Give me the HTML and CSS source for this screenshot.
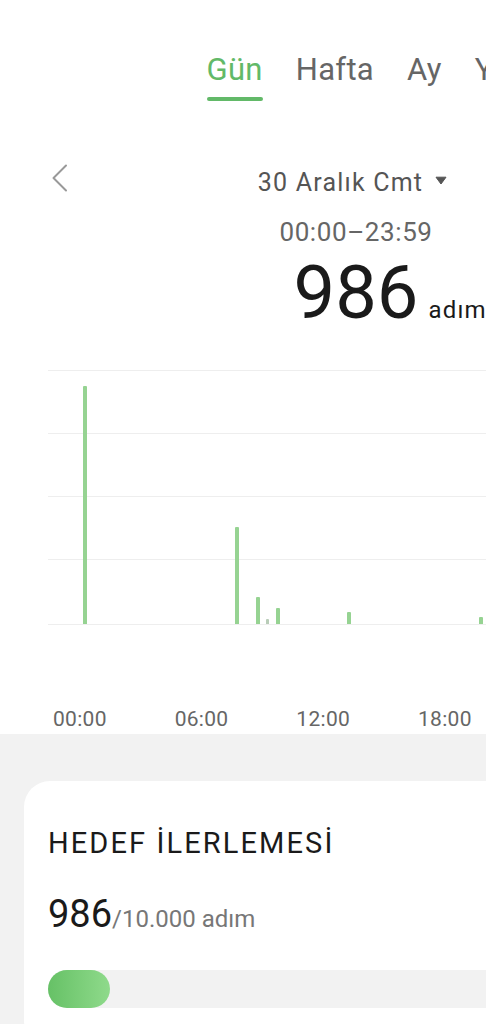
FILE: index.html
```html
<!DOCTYPE html>
<html lang="tr">
<head>
    <meta charset="UTF-8">
    <meta name="viewport" content="width=device-width, initial-scale=1.0">
    <title>Adımlar</title>
    <link rel="stylesheet" href="styles.css">
</head>
<body>
<div class="page">

    <nav class="tabs">
        <div class="tab active">Gün<span class="tab-bar"></span></div>
        <div class="tab">Hafta</div>
        <div class="tab">Ay</div>
        <div class="tab">Yıl</div>
    </nav>

    <div class="date-row">
        <svg class="chevron" width="16" height="28" viewBox="0 0 16 28">
            <polyline points="14,1.5 1.5,14 14,26.5" fill="none" stroke="#999" stroke-width="2" stroke-linecap="round" stroke-linejoin="round"/>
        </svg>
        <div class="date">
            30 Aralık Cmt
            <svg class="caret" width="12" height="9" viewBox="0 0 12 9">
                <path d="M1 1.2 L11 1.2 L6 8 Z" fill="#555" stroke="#555" stroke-width="1" stroke-linejoin="round"/>
            </svg>
        </div>
        <svg class="chevron right" width="16" height="28" viewBox="0 0 16 28">
            <polyline points="2,1.5 14.5,14 2,26.5" fill="none" stroke="#ccc" stroke-width="2" stroke-linecap="round" stroke-linejoin="round"/>
        </svg>
    </div>

    <p class="range">00:00–23:59</p>

    <div class="total">
        <span></span>
        <span class="total-num">986</span>
        <span class="total-unit">adım</span>
    </div>

    <!-- adım grafiği: 48 adet yarım saatlik dilim -->
    <div class="plot">
        <div class="bars">
            <div class="bar" style="grid-column:1;height:238px"></div>
            <div class="bar" style="grid-column:16;height:97px"></div>
            <div class="bar" style="grid-column:18;height:27px"></div>
            <div class="bar faint" style="grid-column:19;height:5px"></div>
            <div class="bar" style="grid-column:20;height:16px"></div>
            <div class="bar" style="grid-column:27;height:12px"></div>
            <div class="bar" style="grid-column:40;height:7px"></div>
        </div>
    </div>

    <div class="axis">
        <span>00:00</span>
        <span>06:00</span>
        <span>12:00</span>
        <span>18:00</span>
        <span>24:00</span>
    </div>

    <section class="summary">
        <div class="card">
            <h3 class="card-title">HEDEF İLERLEMESİ</h3>
            <p class="goal"><span class="goal-num">986</span><span class="goal-total">/10.000 adım</span></p>
            <div class="track">
                <div class="fill" style="width:62px"></div>
            </div>
        </div>
    </section>

</div>
</body>
</html>
```

FILE: styles.css
```css
body {
    margin: 0;
    background: #fff;
    font-family: Roboto, "Liberation Sans", sans-serif;
    overflow: hidden;
}
.page {
    width: 712px;
}

/* sekmeler */
.tabs {
    display: flex;
    justify-content: center;
    gap: 33px;
    padding-top: 50px;
    padding-left: 4px;
}
.tab {
    display: flex;
    flex-direction: column;
    font-size: 31px;
    line-height: 40px;
    letter-spacing: 0.3px;
    color: #666;
}
.tab.active {
    color: #62b968;
}
.tab-bar {
    height: 4px;
    margin-top: 7px;
    border-radius: 2px;
    background: #62b968;
}

/* tarih */
.date-row {
    display: grid;
    grid-template-columns: 1fr auto 1fr;
    align-items: start;
    margin-top: 63px;
    padding: 0 52px;
}
.chevron.right {
    justify-self: end;
}
.date {
    display: flex;
    align-items: center;
    margin-right: 7px;
    padding-top: 1px;
    font-size: 25px;
    line-height: 35px;
    letter-spacing: 1.2px;
    color: #555;
}
.caret {
    margin-left: 12px;
    margin-top: -4px;
}
.range {
    margin: 15px 0 0;
    text-align: center;
    font-size: 26px;
    line-height: 34px;
    letter-spacing: 0.6px;
    color: #666;
}
.total {
    display: grid;
    grid-template-columns: 1fr auto 1fr;
    align-items: baseline;
    margin-top: 4px;
    color: #1a1a1a;
}
.total-num {
    font-size: 74px;
    line-height: 80px;
}
.total-unit {
    font-size: 24px;
    letter-spacing: 1.2px;
    margin-left: 10px;
}

/* grafik */
.plot {
    height: 253px;
    margin: 37px 48px 0;
    border-top: 1px solid #eee;
    border-bottom: 1px solid #eee;
    background:
        linear-gradient(#eee, #eee) 0 62px / 100% 1px no-repeat,
        linear-gradient(#eee, #eee) 0 125px / 100% 1px no-repeat,
        linear-gradient(#eee, #eee) 0 188px / 100% 1px no-repeat;
}
.bars {
    display: grid;
    grid-template-columns: repeat(48, 1fr);
    width: 487px;
    height: 100%;
    margin-left: 32px;
}
.bar {
    grid-row: 1;
    align-self: end;
    justify-self: center;
    width: 4px;
    border-radius: 1px 1px 0 0;
    background: #96d392;
}
.bar.faint {
    width: 3px;
    background: #b9cdb8;
}
.axis {
    display: flex;
    margin-top: 80px;
    padding-left: 19px;
    padding-bottom: 1px;
}
.axis span {
    flex: 0 0 121.7px;
    text-align: center;
    font-size: 21px;
    line-height: 28px;
    letter-spacing: 0.3px;
    color: #666;
}

/* hedef kartı */
.summary {
    background: #f2f2f2;
    padding: 47px 24px 24px;
}
.card {
    background: #fff;
    border-radius: 26px;
    padding: 44px 24px 40px;
}
.card-title {
    margin: 0;
    font-size: 29px;
    line-height: 36px;
    font-weight: normal;
    letter-spacing: 2.1px;
    color: #1a1a1a;
}
.goal {
    margin: 30px 0 0;
    line-height: 46px;
}
.goal-num {
    font-size: 38px;
    color: #1a1a1a;
}
.goal-total {
    font-size: 24px;
    color: #777;
}
.track {
    height: 38px;
    margin-top: 25px;
    border-radius: 19px;
    background: #f2f2f2;
}
.fill {
    height: 100%;
    border-radius: 19px;
    background: linear-gradient(to right, #66c166, #8fda8b);
}
```
